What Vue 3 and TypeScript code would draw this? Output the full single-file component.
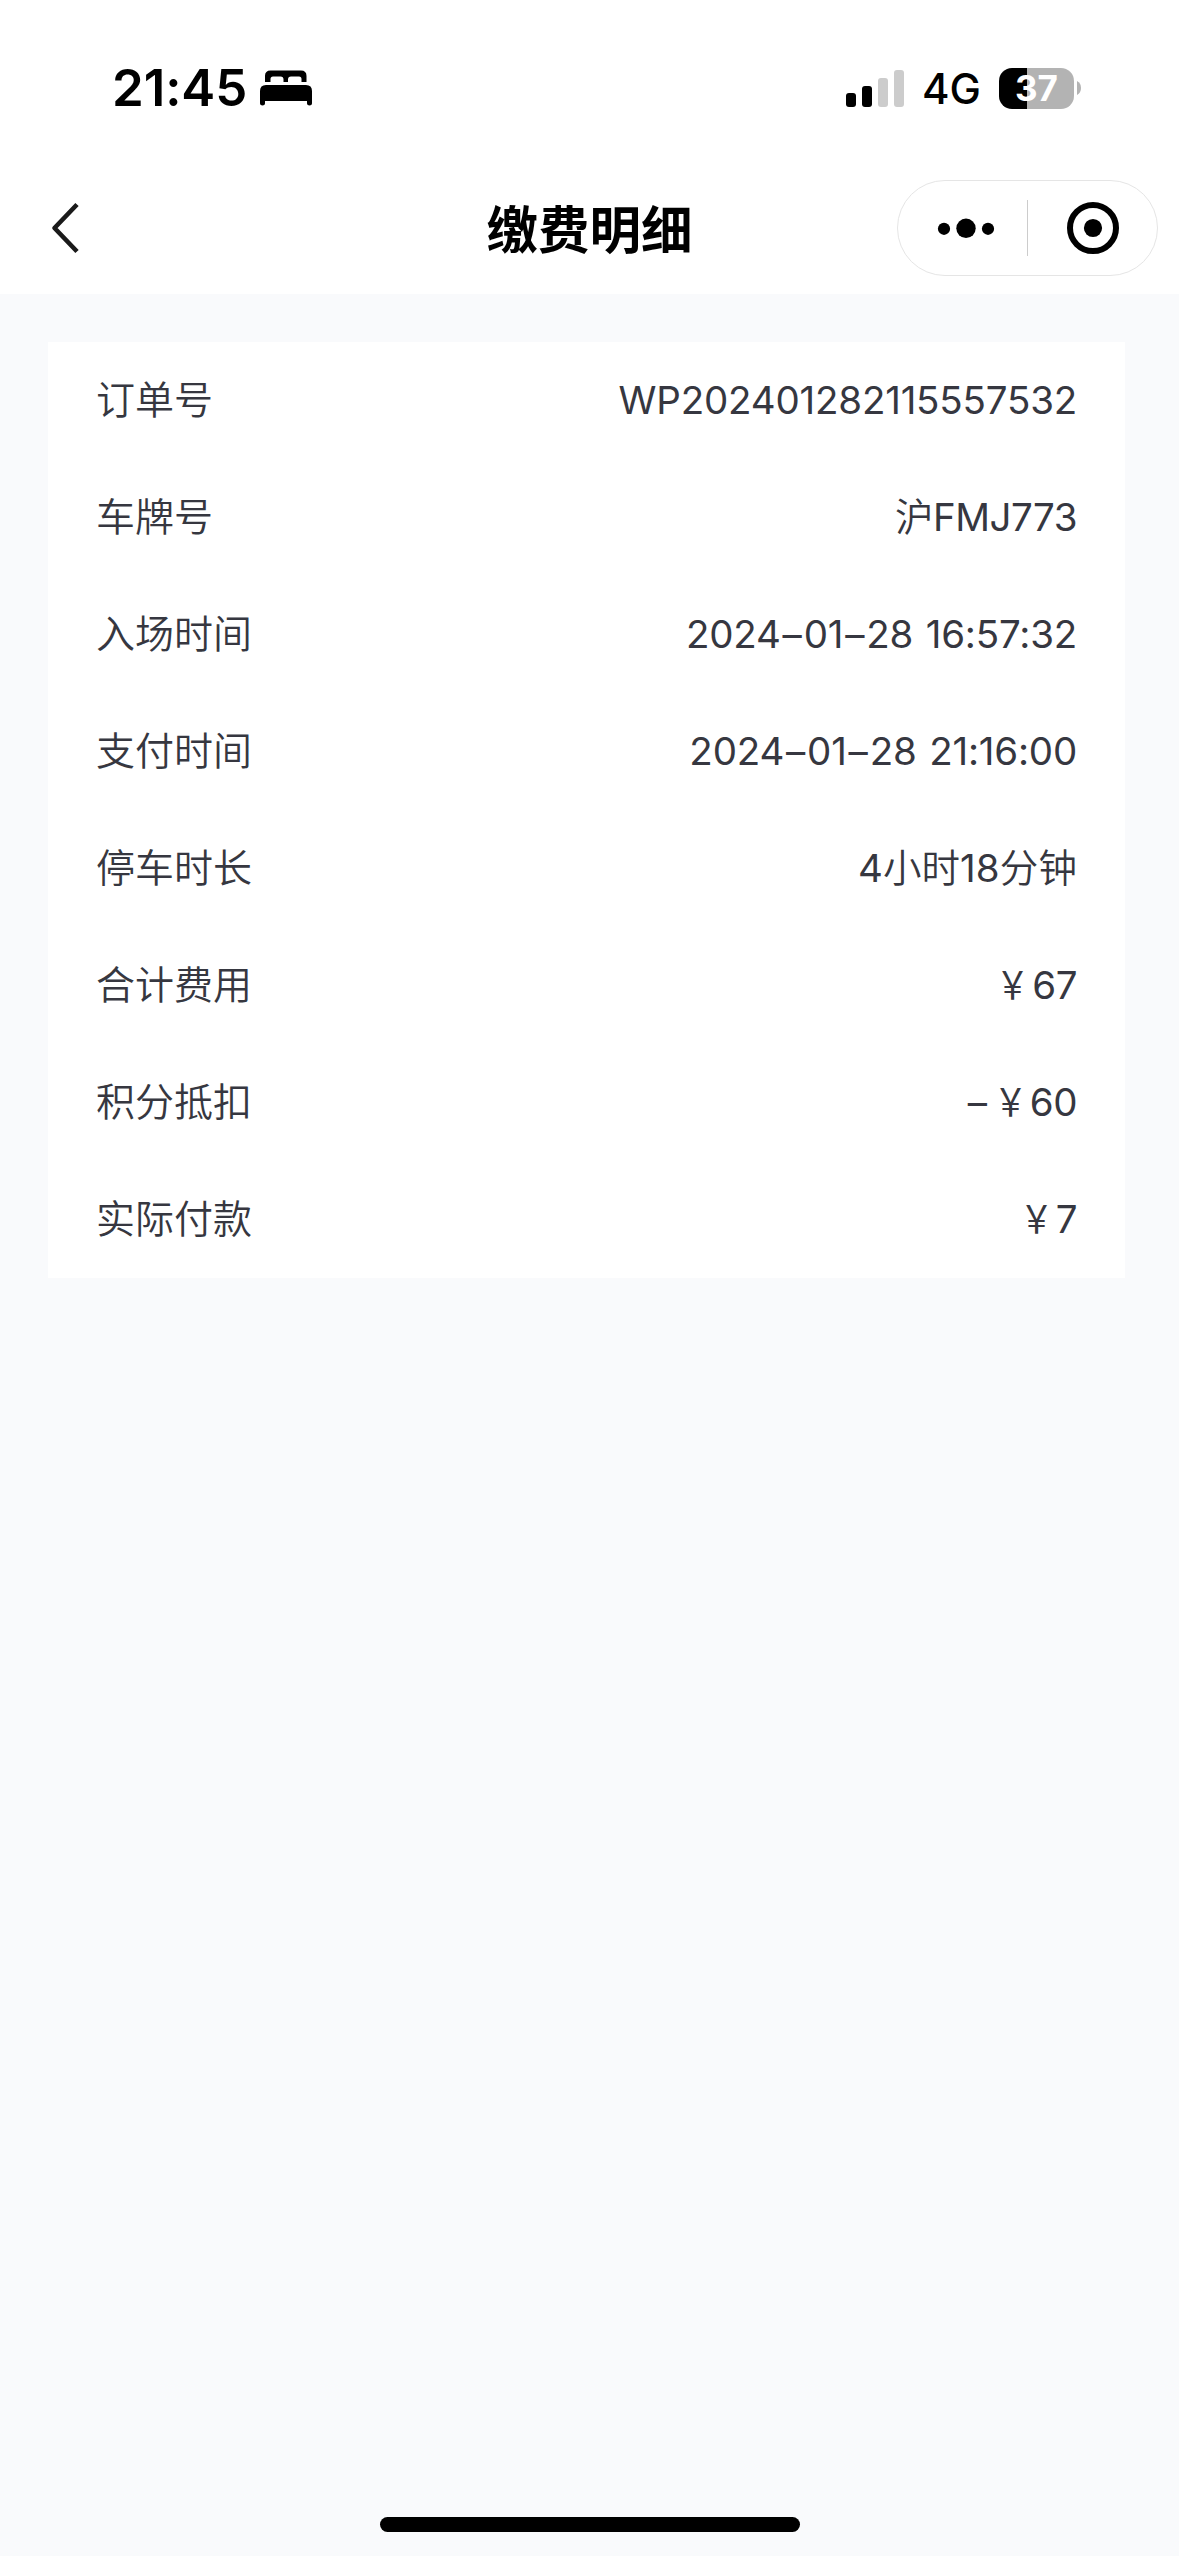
<script setup lang="ts">
interface Row {
  label: string
  value: string
  spacing: number
}

const rows: Row[] = [
  { label: '订单号', value: 'WP202401282115557532', spacing: -0.2 },
  { label: '车牌号', value: '沪FMJ773', spacing: -0.5 },
  { label: '入场时间', value: '2024–01–28 16:57:32', spacing: -0.2 },
  { label: '支付时间', value: '2024–01–28 21:16:00', spacing: -0.2 },
  { label: '停车时长', value: '4小时18分钟', spacing: 0.1 },
  { label: '合计费用', value: '￥67', spacing: -0.5 },
  { label: '积分抵扣', value: '–￥60', spacing: -0.5 },
  { label: '实际付款', value: '￥7', spacing: -0.5 },
]

// Dashes, yen signs and Chinese characters are set apart from Latin text.
const parts = (value: string): string[] => value.split(/([–￥]|[\u4e00-\u9fff]+)/).filter(Boolean)
const partClass = (part: string): string => {
  if (part === '–') return 'dash'
  if (part === '￥') return 'yen'
  return /[\u4e00-\u9fff]/.test(part) ? 'han' : 'text'
}
</script>

<template>
  <div class="screen">
    <header class="top">
      <div class="status">
        <div class="status-left">
          <span class="time">21:45</span>
          <svg class="bed" width="52" height="36" viewBox="0 0 52 36">
            <path d="M5 12V6Q5 0.5 10.500 0.500H41Q46.500 0.500 46.500 6V12H41.500V9Q41.500 6.500 39 6.500H31Q28 6.500 28 9.500V12H23.500V9.500Q23.500 6.500 20.500 6.500H13Q10.500 6.500 10.500 9V12Z" />
            <path d="M0 33.500V21Q0 15 6 15H46Q52 15 52 21V33.500Q52 35.500 49.500 35.500Q47 35.500 47 33.500V31H5V33.500Q5 35.500 2.500 35.500Q0 35.500 0 33.500Z" />
          </svg>
        </div>
        <div class="status-right">
          <svg width="58" height="37" viewBox="0 0 58 37">
            <rect x="0" y="23" width="10" height="14" rx="3" />
            <rect x="16" y="16" width="10" height="21" rx="3" />
            <rect x="32" y="8" width="10" height="29" rx="3" fill="#ccc" />
            <rect x="48" y="0" width="10" height="37" rx="3" fill="#ccc" />
          </svg>
          <span class="net">4G</span>
          <div class="battery">37</div>
          <svg class="nub" width="4" height="14" viewBox="0 0 4 14">
            <path d="M0 0Q4 2 4 7T0 14Z" fill="#b3b3b3" />
          </svg>
        </div>
      </div>
      <nav class="nav">
        <svg class="back" width="30" height="54" viewBox="0 0 30 54">
          <path d="M26 3.500L3.500 27L26 50.500" fill="none" stroke="#1a1a1a" stroke-width="4.600" stroke-linejoin="round" />
        </svg>
        <h1 class="title">缴费明细</h1>
        <div class="capsule">
          <svg width="261" height="96" viewBox="0 0 261 96">
            <rect x="0.500" y="0.500" width="260" height="95" rx="47.500" fill="#fff" stroke="#e5e5e5" />
            <circle cx="47" cy="48.800" r="6.100" />
            <circle cx="69" cy="48.300" r="9.700" />
            <circle cx="91" cy="48.800" r="6.100" />
            <rect x="130" y="20" width="1" height="56" fill="#ccc" />
            <circle cx="196" cy="48" r="23" fill="none" stroke="#000" stroke-width="6" />
            <circle cx="196" cy="48" r="9.100" />
          </svg>
        </div>
      </nav>
    </header>
    <main class="body">
      <section class="card">
        <div v-for="row in rows" :key="row.label" class="row">
          <span class="label">{{ row.label }}</span>
          <span class="value" :style="{ letterSpacing: row.spacing + 'px' }"><span v-for="(part, i) in parts(row.value)" :key="i" :class="partClass(part)">{{ part }}</span></span>
        </div>
      </section>
    </main>
    <footer class="footer"><div class="home"></div></footer>
  </div>
</template>

<style>
body {
  margin: 0;
  background: #f9fafc;
}
</style>

<style scoped>
.screen {
  box-sizing: border-box;
  width: 1179px;
  height: 2556px;
  display: flex;
  flex-direction: column;
  background: #f9fafc;
  color: #000;
  font-family: Inter, "Noto Sans CJK SC", sans-serif;
  overflow: hidden;
}
.top {
  height: 294px;
  background: #fff;
}
.status {
  box-sizing: border-box;
  height: 162px;
  padding: 60px 98px 46px 112px;
  display: flex;
  justify-content: space-between;
  align-items: center;
}
.status-left,
.status-right {
  display: flex;
  align-items: center;
}
.time {
  width: 148px;
  font-size: 51px;
  font-weight: 600;
  line-height: 56px;
  letter-spacing: -0.1px;
  white-space: nowrap;
}
.bed {
  display: block;
}
.net {
  width: 75px;
  padding-left: 18px;
  box-sizing: border-box;
  font-size: 42px;
  font-weight: 500;
  line-height: 56px;
  margin-top: 2px;
}
.battery {
  margin-left: 20px;
  width: 75px;
  height: 41px;
  border-radius: 13px;
  background: linear-gradient(90deg, #000 28px, #b3b3b3 28px);
  color: #fff;
  font-size: 35px;
  font-weight: 700;
  line-height: 41px;
  text-align: center;
}
.nub {
  margin-left: 3px;
}
.nav {
  height: 132px;
  display: grid;
  grid-template-columns: 1fr auto 1fr;
  align-items: center;
}
.back {
  margin-left: 51px;
}
.title {
  margin: 0;
  padding-top: 3px;
  font-size: 51.5px;
  font-weight: 700;
  line-height: 60px;
}
.capsule {
  display: flex;
  justify-content: flex-end;
  padding-right: 21px;
}
.body {
  flex: 1;
  padding: 48px 54px 0 48px;
}
.card {
  background: #fff;
}
.row {
  box-sizing: border-box;
  height: 117px;
  padding: 0 48px 2px;
  display: flex;
  justify-content: space-between;
  align-items: center;
  color: #363740;
  line-height: 54px;
}
.label {
  font-size: 39px;
  font-weight: 350;
}
.value {
  display: flex;
  font-size: 38.5px;
  white-space: nowrap;
}
.text {
  white-space: pre;
  word-spacing: 2px;
}
.han {
  font-weight: 350;
}
.dash {
  width: 23px;
  display: flex;
  justify-content: center;
}
.dash:first-child {
  width: 24px;
  justify-content: flex-start;
}
.yen {
  transform: translateX(2px) scaleX(0.86);
  transform-origin: left center;
}
.footer {
  height: 39px;
  display: flex;
  justify-content: center;
}
.home {
  width: 420px;
  height: 15px;
  border-radius: 8px;
  background: #000;
}
</style>
